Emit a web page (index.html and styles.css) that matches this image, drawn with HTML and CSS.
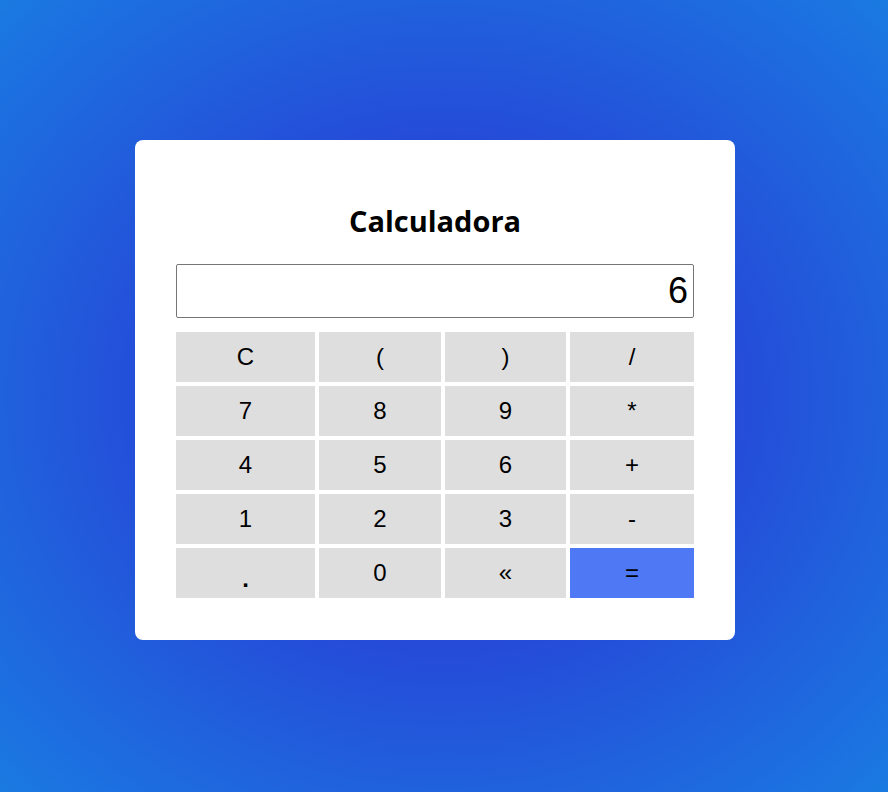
FILE: index.html
```html
<!DOCTYPE html>
<html lang="pt">
<head>
<meta charset="utf-8">
<title>Calculadora</title>
<link rel="stylesheet" href="styles.css">
</head>
<body>
<div class="card">
  <h1 class="title">Calculadora</h1>
  <input class="display" type="text" value="6" autofocus>
  <div class="keys">
    <button class="key">C</button>
    <button class="key">(</button>
    <button class="key">)</button>
    <button class="key">/</button>
    <button class="key">7</button>
    <button class="key">8</button>
    <button class="key">9</button>
    <button class="key">*</button>
    <button class="key">4</button>
    <button class="key">5</button>
    <button class="key">6</button>
    <button class="key">+</button>
    <button class="key">1</button>
    <button class="key">2</button>
    <button class="key">3</button>
    <button class="key">-</button>
    <button class="key key-dot">.</button>
    <button class="key">0</button>
    <button class="key">«</button>
    <button class="key key-eq">=</button>
  </div>
</div>
</body>
</html>
```

FILE: styles.css
```css
html, body {
  margin: 0;
  height: 100%;
}
body {
  background: radial-gradient(ellipse at 50% 50%, #2938d5 0%, #254bd8 45%, #1a7ae2 100%);
  display: flex;
  justify-content: center;
  align-items: flex-start;
  padding-top: 140px;
  padding-right: 18px;
  box-sizing: border-box;
  font-family: "Liberation Sans", Arial, sans-serif;
}
.card {
  background: #fff;
  width: 600px;
  height: 500px;
  box-sizing: border-box;
  border-radius: 8px;
  padding: 41px;
  display: flex;
  flex-direction: column;
}
.title {
  margin: 20px 0 23px;
  font-family: "Open Sans", "Noto Sans", sans-serif;
  font-weight: 700;
  font-size: 29px;
  line-height: 40px;
  text-align: center;
  color: #000;
}
.display {
  height: 54px;
  box-sizing: border-box;
  border: 1px solid #767676;
  border-radius: 2px;
  outline: none;
  padding: 0 5px;
  font-family: "Liberation Sans", Arial, sans-serif;
  font-size: 36px;
  text-align: right;
  color: #000;
  caret-color: #000;
  margin: 0 0 14px;
  width: 100%;
}
.keys {
  display: grid;
  grid-template-columns: 139px 122px 121px 124px;
  grid-auto-rows: 50px;
  gap: 4px;
}
.key {
  border: none;
  margin: 0;
  padding: 0;
  background: #dedede;
  font-family: "Liberation Sans", Arial, sans-serif;
  font-size: 24px;
  color: #000;
}
.key-dot {
  font-weight: 700;
  padding-top: 12px;
}
.key-eq {
  background: #4f78f4;
}
```
